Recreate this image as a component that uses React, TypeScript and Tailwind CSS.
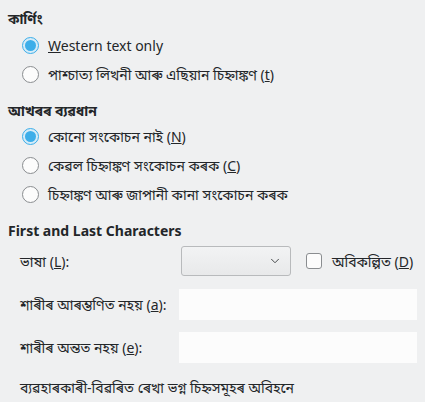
import { ChevronDown } from "lucide-react";

function Radio({ checked, children }: { checked?: boolean; children: React.ReactNode }) {
  return (
    <div className="flex h-[29px] items-center pl-[22px]">
      {checked ? (
        <span className="flex h-[17px] w-[17px] items-center justify-center rounded-full border border-[#3daee9] bg-[#d6ecf8]">
          <span className="h-[11px] w-[11px] rounded-full bg-[#3daee9]" />
        </span>
      ) : (
        <span className="h-[17px] w-[17px] rounded-full border border-[#8a8d90] bg-[#fcfcfc]" />
      )}
      <span className="ml-[9px] whitespace-nowrap">{children}</span>
    </div>
  );
}

function Heading({ children, className = "" }: { children: React.ReactNode; className?: string }) {
  return <div className={`flex h-[20px] items-center pl-2 font-bold ${className}`}>{children}</div>;
}

export default function App() {
  return (
    <div
      className="h-[402px] w-[425px] overflow-hidden bg-[#eff0f1] pt-2 text-[14px] text-[#232629]"
      style={{ fontFamily: '"Noto Sans", "Noto Sans Bengali", sans-serif' }}
    >
      <Heading>কার্ণিং</Heading>
      <div className="mt-[3px]">
        <Radio checked>
          <u>W</u>estern text only
        </Radio>
        <Radio>
          পাশ্চাত্য লিখনী আৰু এছিয়ান চিহ্নাঙ্কণ (<u>t</u>)
        </Radio>
      </div>

      <Heading className="mt-[11px]">আখৰৰ ব্যৱধান</Heading>
      <div className="mt-[2px]">
        <Radio checked>
          কোনো সংকোচন নাই (<u>N</u>)
        </Radio>
        <Radio>
          কেৱল চিহ্নাঙ্কণ সংকোচন কৰক (<u>C</u>)
        </Radio>
        <Radio>চিহ্নাঙ্কণ আৰু জাপানী কানা সংকোচন কৰক</Radio>
      </div>

      <Heading className="mt-[11px]">First and Last Characters</Heading>

      <div className="mt-[6px] flex h-[30px] items-center">
        <span className="w-[181px] shrink-0 whitespace-nowrap pl-5">
          ভাষা (<u>L</u>):
        </span>
        <div className="flex h-[30px] w-[110px] shrink-0 items-center justify-end rounded-[3px] border border-[#b8babc] bg-gradient-to-b from-[#f2f3f4] to-[#e8e9ea] pr-[8px] text-[#3b3e41]">
          <ChevronDown size={14} strokeWidth={1.6} />
        </div>
        <span className="ml-[15px] h-[16px] w-[16px] shrink-0 rounded-[3px] border border-[#8a8d90] bg-[#fcfcfc]" />
        <span className="ml-[10px] whitespace-nowrap">
          অবিকল্পিত (<u>D</u>)
        </span>
      </div>

      <div className="mt-[13px] flex h-[31px] items-center">
        <span className="w-[179px] shrink-0 whitespace-nowrap pl-5">
          শাৰীৰ আৰম্ভণিত নহয় (<u>a</u>):
        </span>
        <div className="h-[31px] w-[238px] shrink-0 bg-[#fcfcfc]" />
      </div>

      <div className="mt-[12px] flex h-[31px] items-center">
        <span className="w-[179px] shrink-0 whitespace-nowrap pl-5">
          শাৰীৰ অন্তত নহয় (<u>e</u>):
        </span>
        <div className="h-[31px] w-[238px] shrink-0 bg-[#fcfcfc]" />
      </div>

      <div className="mt-[14px] flex h-[20px] items-center whitespace-nowrap pl-5">
        ব্যৱহাৰকাৰী-বিৱৰিত ৰেখা ভগ্ন চিহ্নসমূহৰ অবিহনে
      </div>
    </div>
  );
}
